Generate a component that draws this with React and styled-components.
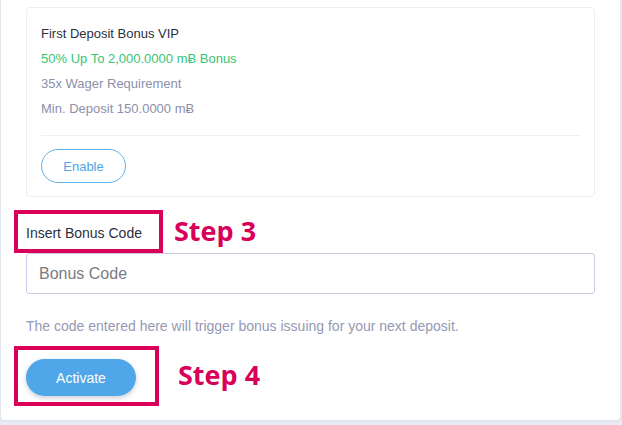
import React from "react";
import styled, { createGlobalStyle } from "styled-components";

const Global = createGlobalStyle`
  html, body { margin: 0; padding: 0; }
  body {
    background: #e8ebf3;
    font-family: "Liberation Sans", Arial, sans-serif;
    width: 622px;
    height: 425px;
    overflow: hidden;
  }
  * { box-sizing: border-box; }
`;

const Panel = styled.div`
  width: 621px;
  display: flex;
  flex-direction: column;
  background: #ffffff;
  border-left: 1px solid #e3e6ef;
  border-right: 1px solid #e3e6ef;
  border-radius: 0 0 4px 4px;
  padding: 7px 25px 24px 25px;
  box-shadow: 0 1px 2px rgba(120, 130, 160, 0.12);
`;

const Card = styled.div`
  display: flex;
  flex-direction: column;
  align-items: flex-start;
  border: 1px solid #eceef3;
  border-radius: 4px;
  padding: 13px 14px;
`;

const Line = styled.div`
  font-size: 13px;
  line-height: 25px;
  color: ${(p) =>
    p.$tone === "title" ? "#2b2f3f" : p.$tone === "green" ? "#37c474" : "#8c90aa"};
  white-space: nowrap;
`;

const Divider = styled.div`
  align-self: stretch;
  height: 1px;
  background: #eef0f4;
  margin: 14px 0 13px;
`;

const OutlineButton = styled.button`
  width: 85px;
  height: 34px;
  border-radius: 17px;
  border: 1px solid #5eb0ec;
  background: #fff;
  color: #4ea5e7;
  font-family: "Liberation Sans", Arial, sans-serif;
  font-size: 13px;
  padding: 0;
  cursor: pointer;
`;

const Field = styled.div`
  position: relative;
  display: flex;
  flex-direction: column;
  gap: 10px;
  margin-top: 26px;
`;

const Frame = styled.div`
  position: absolute;
  left: ${(p) => p.$left}px;
  top: ${(p) => p.$top}px;
  width: ${(p) => p.$w}px;
  height: ${(p) => p.$h}px;
  border: 4px solid #d9005a;
  pointer-events: none;
`;

const StepTag = styled.span`
  position: absolute;
  left: ${(p) => p.$left}px;
  top: ${(p) => p.$top}px;
  font-family: "Open Sans", "Liberation Sans", sans-serif;
  font-weight: 700;
  font-size: 27px;
  line-height: 1;
  color: #d9005a;
  white-space: nowrap;
`;

const FieldLabel = styled.label`
  font-size: 14px;
  line-height: 20px;
  color: #2b2f3f;
`;

const Input = styled.input`
  width: 100%;
  height: 41px;
  border: 1px solid #c9cce6;
  border-radius: 3px;
  padding: 0 12px;
  font-family: "Liberation Sans", Arial, sans-serif;
  font-size: 16px;
  color: #333;
  outline: none;
  &::placeholder { color: #7a7a80; }
`;

const Help = styled.p`
  margin: 22px 0 0;
  font-size: 14px;
  line-height: 20px;
  color: #9599b4;
`;

const ActionRow = styled.div`
  position: relative;
  display: flex;
  align-items: center;
  margin-top: 23px;
`;

const PrimaryButton = styled.button`
  width: 110px;
  height: 37px;
  border-radius: 19px;
  border: none;
  background: #4fa7e9;
  color: #fff;
  font-family: "Liberation Sans", Arial, sans-serif;
  font-size: 14px;
  padding: 0;
  box-shadow: 0 2px 5px rgba(40, 60, 90, 0.25);
  cursor: pointer;
`;

export default function App() {
  return (
    <>
      <Global />
      <Panel>
        <Card>
          <Line $tone="title">First Deposit Bonus VIP</Line>
          <Line $tone="green">50% Up To 2,000.0000 mɃ Bonus</Line>
          <Line>35x Wager Requirement</Line>
          <Line>Min. Deposit 150.0000 mɃ</Line>
          <Divider />
          <OutlineButton>Enable</OutlineButton>
        </Card>
        <Field>
          <FieldLabel htmlFor="bonus">Insert Bonus Code</FieldLabel>
          <Input id="bonus" placeholder="Bonus Code" />
          <Frame $left={-12} $top={-13} $w={149} $h={43} />
          <StepTag $left={148} $top={-6}>Step 3</StepTag>
        </Field>
        <Help>The code entered here will trigger bonus issuing for your next deposit.</Help>
        <ActionRow>
          <PrimaryButton>Activate</PrimaryButton>
          <Frame $left={-12} $top={-13} $w={145} $h={60} />
          <StepTag $left={152} $top={2}>Step 4</StepTag>
        </ActionRow>
      </Panel>
    </>
  );
}
